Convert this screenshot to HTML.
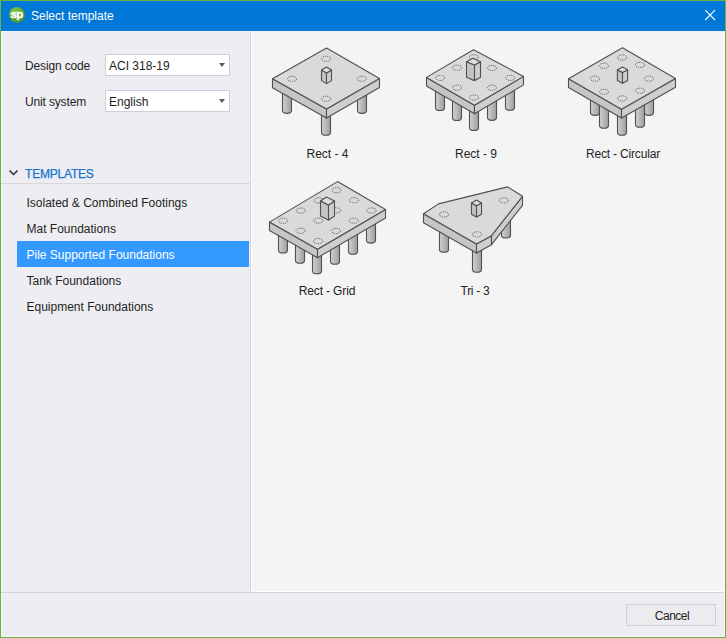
<!DOCTYPE html>
<html><head><meta charset="utf-8">
<style>
*{box-sizing:border-box}
html,body{margin:0;padding:0}
body{width:726px;height:638px;overflow:hidden;position:relative;background:#6db33f;font-family:"Liberation Sans",sans-serif;font-size:12px;color:#1e1e1e}
.a{position:absolute}
.t{position:absolute;line-height:14px;white-space:nowrap}
#win{left:1px;top:1px;width:724px;height:636px;background:#f8f7fc}
#title{left:1px;top:1px;width:724px;height:30px;background:#0078d7}
#titleline{left:1px;top:31px;width:724px;height:1px;background:#f6f2f2}
#left{left:2px;top:32px;width:248px;height:560px;background:#eeeef2}
#vline{left:250px;top:32px;width:1px;height:560px;background:#d3d5d5}
#vwhite{left:251px;top:32px;width:1px;height:560px;background:#ffffff}
#right{left:252px;top:32px;width:472px;height:559px;background:#f4f4f4}
#hwhite{left:251px;top:591px;width:473px;height:1px;background:#ffffff}
#hline{left:1px;top:592px;width:723px;height:1px;background:#d4d4d8}
#foot{left:2px;top:593px;width:722px;height:43px;background:#eeeef2}
.combo{position:absolute;left:105px;width:125px;height:22px;background:#fff;border:1px solid #cccedb}
.combo span{position:absolute;left:3px;top:4px;line-height:14px}
.combo i{position:absolute;left:113px;top:8px;width:0;height:0;border-left:3px solid transparent;border-right:3px solid transparent;border-top:4px solid #5a5a5a}
.item{position:absolute;left:17px;width:232px;height:26px;line-height:26px;padding-left:9.5px;padding-top:1px;white-space:nowrap}
.sel{background:#3399ff;color:#fff}
.lbl{position:absolute;line-height:14px;white-space:nowrap;text-align:center;width:140px}
#cancel{left:626px;top:604px;width:90px;height:22px;border:1px solid #cccedb;background:#ececf0}
</style></head><body>
<div class="a" id="win"></div>
<div class="a" id="title"></div>
<div class="a" id="titleline"></div>
<svg class="a" style="left:0;top:0" width="40" height="31" viewBox="0 0 40 31">
 <defs><radialGradient id="ig" cx="0.35" cy="0.3" r="0.8"><stop offset="0" stop-color="#86c94a"/><stop offset="1" stop-color="#3f8f2a"/></radialGradient></defs>
 <circle cx="16.9" cy="14.9" r="8" fill="url(#ig)"/>
 <text x="10.4" y="17.9" font-family="Liberation Sans" font-weight="bold" font-size="11.5" fill="#fff" stroke="#fff" stroke-width="0.35" letter-spacing="-0.6">sp</text>
</svg>
<div class="t" style="left:31px;top:9px;color:#fff">Select template</div>
<svg class="a" style="left:700px;top:5px" width="20" height="20" viewBox="700 5 20 20">
 <path d="M705.2,10.2 L715,20 M715,10.2 L705.2,20" stroke="#fff" stroke-width="1.1" fill="none"/>
</svg>
<div class="a" id="left"></div>
<div class="a" id="vline"></div>
<div class="a" id="vwhite"></div>
<div class="a" id="right"></div>
<div class="a" id="hwhite"></div>
<div class="a" id="hline"></div>
<div class="a" id="foot"></div>

<div class="t" style="left:25px;top:59px;letter-spacing:-0.15px">Design code</div>
<div class="combo" style="top:54px"><span>ACI 318-19</span><i></i></div>
<div class="t" style="left:25px;top:95px;letter-spacing:-0.15px">Unit system</div>
<div class="combo" style="top:90px"><span>English</span><i></i></div>

<svg class="a" style="left:0;top:160px" width="24" height="24" viewBox="0 160 24 24">
 <path d="M9.5,170.5 L13.5,174.5 L17.5,170.5" stroke="#2d2d30" stroke-width="1.5" fill="none"/>
</svg>
<div class="t" style="left:25px;top:167px;color:#1472d2;letter-spacing:-0.2px;-webkit-text-stroke:0.25px #1472d2">TEMPLATES</div>
<div class="a" style="left:1px;top:183px;width:249px;height:1px;background:#d6d6dc"></div>

<div class="item" style="top:189px">Isolated &amp; Combined Footings</div>
<div class="item" style="top:215px">Mat Foundations</div>
<div class="item sel" style="top:241px">Pile Supported Foundations</div>
<div class="item" style="top:267px">Tank Foundations</div>
<div class="item" style="top:293px">Equipment Foundations</div>

<svg class="a" style="left:0;top:0" width="726" height="638" viewBox="0 0 726 638">
<defs><linearGradient id="pg" x1="0" y1="0" x2="1" y2="0"><stop offset="0" stop-color="#d2d2d2"/><stop offset="1" stop-color="#9e9e9e"/></linearGradient></defs>
<path d="M282.50,90.00 L282.50,110.60 A4.50,2.80 0 0 0 291.50,110.60 L291.50,90.00 Z" fill="url(#pg)" stroke="#505050" stroke-width="1.1"/><path d="M357.50,90.00 L357.50,110.60 A4.50,2.80 0 0 0 366.50,110.60 L366.50,90.00 Z" fill="url(#pg)" stroke="#505050" stroke-width="1.1"/><path d="M321.50,112.00 L321.50,132.50 A4.50,2.80 0 0 0 330.50,132.50 L330.50,112.00 Z" fill="url(#pg)" stroke="#505050" stroke-width="1.1"/><polygon points="272.50,78.80 326.50,109.10 326.50,118.10 272.50,87.80" fill="#c6c6c6" stroke="#505050" stroke-width="1.1" stroke-linejoin="round"/><polygon points="326.50,109.10 379.50,78.60 379.50,87.60 326.50,118.10" fill="#cecece" stroke="#505050" stroke-width="1.1" stroke-linejoin="round"/><polygon points="326.50,48.00 379.50,78.60 326.50,109.10 272.50,78.80" fill="#dadada" stroke="#505050" stroke-width="1.1" stroke-linejoin="round"/><ellipse cx="326.10" cy="58.80" rx="4.6" ry="2.6" fill="none" stroke="#555" stroke-width="0.9" stroke-dasharray="1.2 1"/><ellipse cx="292.00" cy="78.90" rx="4.6" ry="2.6" fill="none" stroke="#555" stroke-width="0.9" stroke-dasharray="1.2 1"/><ellipse cx="361.90" cy="78.80" rx="4.6" ry="2.6" fill="none" stroke="#555" stroke-width="0.9" stroke-dasharray="1.2 1"/><ellipse cx="326.10" cy="98.80" rx="4.6" ry="2.6" fill="none" stroke="#555" stroke-width="0.9" stroke-dasharray="1.2 1"/><polygon points="321.50,70.00 326.50,73.00 326.50,83.60 321.50,80.60" fill="#c4c4c4" stroke="#505050" stroke-width="1.1" stroke-linejoin="round"/><polygon points="326.50,73.00 331.50,70.00 331.50,80.60 326.50,83.60" fill="#cdcdcd" stroke="#505050" stroke-width="1.1" stroke-linejoin="round"/><polygon points="326.50,67.00 331.50,70.00 326.50,73.00 321.50,70.00" fill="#dedede" stroke="#505050" stroke-width="1.1" stroke-linejoin="round"/><path d="M435.50,90.00 L435.50,107.70 A4.50,2.80 0 0 0 444.50,107.70 L444.50,90.00 Z" fill="url(#pg)" stroke="#505050" stroke-width="1.1"/><path d="M505.50,90.00 L505.50,107.50 A4.50,2.80 0 0 0 514.50,107.50 L514.50,90.00 Z" fill="url(#pg)" stroke="#505050" stroke-width="1.1"/><path d="M452.50,95.00 L452.50,117.70 A4.50,2.80 0 0 0 461.50,117.70 L461.50,95.00 Z" fill="url(#pg)" stroke="#505050" stroke-width="1.1"/><path d="M487.50,95.00 L487.50,117.60 A4.50,2.80 0 0 0 496.50,117.60 L496.50,95.00 Z" fill="url(#pg)" stroke="#505050" stroke-width="1.1"/><path d="M469.50,108.00 L469.50,127.70 A4.50,2.80 0 0 0 478.50,127.70 L478.50,108.00 Z" fill="url(#pg)" stroke="#505050" stroke-width="1.1"/><polygon points="426.50,77.40 474.50,105.30 474.50,113.80 426.50,85.90" fill="#c6c6c6" stroke="#505050" stroke-width="1.1" stroke-linejoin="round"/><polygon points="474.50,105.30 523.50,76.40 523.50,84.90 474.50,113.80" fill="#cecece" stroke="#505050" stroke-width="1.1" stroke-linejoin="round"/><polygon points="473.50,49.70 523.50,76.40 474.50,105.30 426.50,77.40" fill="#dadada" stroke="#505050" stroke-width="1.1" stroke-linejoin="round"/><ellipse cx="473.80" cy="57.20" rx="4.6" ry="2.6" fill="none" stroke="#555" stroke-width="0.9" stroke-dasharray="1.2 1"/><ellipse cx="457.10" cy="67.80" rx="4.6" ry="2.6" fill="none" stroke="#555" stroke-width="0.9" stroke-dasharray="1.2 1"/><ellipse cx="491.90" cy="68.00" rx="4.6" ry="2.6" fill="none" stroke="#555" stroke-width="0.9" stroke-dasharray="1.2 1"/><ellipse cx="440.20" cy="77.90" rx="4.6" ry="2.6" fill="none" stroke="#555" stroke-width="0.9" stroke-dasharray="1.2 1"/><ellipse cx="474.00" cy="77.70" rx="4.6" ry="2.6" fill="none" stroke="#555" stroke-width="0.9" stroke-dasharray="1.2 1"/><ellipse cx="510.20" cy="77.90" rx="4.6" ry="2.6" fill="none" stroke="#555" stroke-width="0.9" stroke-dasharray="1.2 1"/><ellipse cx="457.10" cy="87.70" rx="4.6" ry="2.6" fill="none" stroke="#555" stroke-width="0.9" stroke-dasharray="1.2 1"/><ellipse cx="491.90" cy="87.70" rx="4.6" ry="2.6" fill="none" stroke="#555" stroke-width="0.9" stroke-dasharray="1.2 1"/><ellipse cx="474.00" cy="97.60" rx="4.6" ry="2.6" fill="none" stroke="#555" stroke-width="0.9" stroke-dasharray="1.2 1"/><polygon points="466.50,61.70 474.50,65.10 474.50,80.60 466.50,77.20" fill="#c4c4c4" stroke="#505050" stroke-width="1.1" stroke-linejoin="round"/><polygon points="474.50,65.10 480.50,61.70 480.50,77.20 474.50,80.60" fill="#cdcdcd" stroke="#505050" stroke-width="1.1" stroke-linejoin="round"/><polygon points="473.00,58.30 480.50,61.70 474.50,65.10 466.50,61.70" fill="#dedede" stroke="#505050" stroke-width="1.1" stroke-linejoin="round"/><path d="M590.50,95.00 L590.50,112.60 A4.50,2.80 0 0 0 599.50,112.60 L599.50,95.00 Z" fill="url(#pg)" stroke="#505050" stroke-width="1.1"/><path d="M644.50,95.00 L644.50,112.60 A4.50,2.80 0 0 0 653.50,112.60 L653.50,95.00 Z" fill="url(#pg)" stroke="#505050" stroke-width="1.1"/><path d="M599.50,100.00 L599.50,125.40 A4.50,2.80 0 0 0 608.50,125.40 L608.50,100.00 Z" fill="url(#pg)" stroke="#505050" stroke-width="1.1"/><path d="M635.50,100.00 L635.50,124.40 A4.50,2.80 0 0 0 644.50,124.40 L644.50,100.00 Z" fill="url(#pg)" stroke="#505050" stroke-width="1.1"/><path d="M617.50,112.00 L617.50,132.40 A4.50,2.80 0 0 0 626.50,132.40 L626.50,112.00 Z" fill="url(#pg)" stroke="#505050" stroke-width="1.1"/><polygon points="568.50,78.70 621.50,109.20 621.50,118.00 568.50,87.50" fill="#c6c6c6" stroke="#505050" stroke-width="1.1" stroke-linejoin="round"/><polygon points="621.50,109.20 675.50,78.50 675.50,87.30 621.50,118.00" fill="#cecece" stroke="#505050" stroke-width="1.1" stroke-linejoin="round"/><polygon points="622.50,47.80 675.50,78.50 621.50,109.20 568.50,78.70" fill="#dadada" stroke="#505050" stroke-width="1.1" stroke-linejoin="round"/><ellipse cx="649.00" cy="78.70" rx="4.6" ry="2.6" fill="none" stroke="#555" stroke-width="0.9" stroke-dasharray="1.2 1"/><ellipse cx="640.10" cy="64.90" rx="4.6" ry="2.6" fill="none" stroke="#555" stroke-width="0.9" stroke-dasharray="1.2 1"/><ellipse cx="640.10" cy="90.70" rx="4.6" ry="2.6" fill="none" stroke="#555" stroke-width="0.9" stroke-dasharray="1.2 1"/><ellipse cx="622.20" cy="57.50" rx="4.6" ry="2.6" fill="none" stroke="#555" stroke-width="0.9" stroke-dasharray="1.2 1"/><ellipse cx="622.20" cy="98.40" rx="4.6" ry="2.6" fill="none" stroke="#555" stroke-width="0.9" stroke-dasharray="1.2 1"/><ellipse cx="604.00" cy="65.80" rx="4.6" ry="2.6" fill="none" stroke="#555" stroke-width="0.9" stroke-dasharray="1.2 1"/><ellipse cx="604.00" cy="91.80" rx="4.6" ry="2.6" fill="none" stroke="#555" stroke-width="0.9" stroke-dasharray="1.2 1"/><ellipse cx="595.00" cy="78.70" rx="4.6" ry="2.6" fill="none" stroke="#555" stroke-width="0.9" stroke-dasharray="1.2 1"/><polygon points="617.40,69.70 622.50,72.50 622.50,83.30 617.40,80.50" fill="#c4c4c4" stroke="#505050" stroke-width="1.1" stroke-linejoin="round"/><polygon points="622.50,72.50 627.60,69.70 627.60,80.50 622.50,83.30" fill="#cdcdcd" stroke="#505050" stroke-width="1.1" stroke-linejoin="round"/><polygon points="622.50,66.90 627.60,69.70 622.50,72.50 617.40,69.70" fill="#dedede" stroke="#505050" stroke-width="1.1" stroke-linejoin="round"/><path d="M278.50,225.00 L278.50,250.20 A4.50,2.80 0 0 0 287.50,250.20 L287.50,225.00 Z" fill="url(#pg)" stroke="#505050" stroke-width="1.1"/><path d="M366.50,212.00 L366.50,240.30 A4.50,2.80 0 0 0 375.50,240.30 L375.50,212.00 Z" fill="url(#pg)" stroke="#505050" stroke-width="1.1"/><path d="M295.50,235.00 L295.50,260.50 A4.50,2.80 0 0 0 304.50,260.50 L304.50,235.00 Z" fill="url(#pg)" stroke="#505050" stroke-width="1.1"/><path d="M348.50,225.00 L348.50,251.40 A4.50,2.80 0 0 0 357.50,251.40 L357.50,225.00 Z" fill="url(#pg)" stroke="#505050" stroke-width="1.1"/><path d="M312.50,245.00 L312.50,270.90 A4.50,2.80 0 0 0 321.50,270.90 L321.50,245.00 Z" fill="url(#pg)" stroke="#505050" stroke-width="1.1"/><path d="M330.50,235.00 L330.50,261.50 A4.50,2.80 0 0 0 339.50,261.50 L339.50,235.00 Z" fill="url(#pg)" stroke="#505050" stroke-width="1.1"/><polygon points="269.50,222.10 317.50,249.20 317.50,257.70 269.50,230.60" fill="#c6c6c6" stroke="#505050" stroke-width="1.1" stroke-linejoin="round"/><polygon points="317.50,249.20 385.50,209.60 385.50,218.10 317.50,257.70" fill="#cecece" stroke="#505050" stroke-width="1.1" stroke-linejoin="round"/><polygon points="337.50,181.60 385.50,209.60 317.50,249.20 269.50,222.10" fill="#dadada" stroke="#505050" stroke-width="1.1" stroke-linejoin="round"/><ellipse cx="336.50" cy="190.20" rx="4.6" ry="2.6" fill="none" stroke="#555" stroke-width="0.9" stroke-dasharray="1.2 1"/><ellipse cx="318.70" cy="200.40" rx="4.6" ry="2.6" fill="none" stroke="#555" stroke-width="0.9" stroke-dasharray="1.2 1"/><ellipse cx="300.90" cy="210.60" rx="4.6" ry="2.6" fill="none" stroke="#555" stroke-width="0.9" stroke-dasharray="1.2 1"/><ellipse cx="283.10" cy="220.80" rx="4.6" ry="2.6" fill="none" stroke="#555" stroke-width="0.9" stroke-dasharray="1.2 1"/><ellipse cx="354.00" cy="200.20" rx="4.6" ry="2.6" fill="none" stroke="#555" stroke-width="0.9" stroke-dasharray="1.2 1"/><ellipse cx="336.20" cy="210.40" rx="4.6" ry="2.6" fill="none" stroke="#555" stroke-width="0.9" stroke-dasharray="1.2 1"/><ellipse cx="318.40" cy="220.60" rx="4.6" ry="2.6" fill="none" stroke="#555" stroke-width="0.9" stroke-dasharray="1.2 1"/><ellipse cx="300.60" cy="230.80" rx="4.6" ry="2.6" fill="none" stroke="#555" stroke-width="0.9" stroke-dasharray="1.2 1"/><ellipse cx="371.50" cy="210.50" rx="4.6" ry="2.6" fill="none" stroke="#555" stroke-width="0.9" stroke-dasharray="1.2 1"/><ellipse cx="353.70" cy="220.70" rx="4.6" ry="2.6" fill="none" stroke="#555" stroke-width="0.9" stroke-dasharray="1.2 1"/><ellipse cx="335.90" cy="230.90" rx="4.6" ry="2.6" fill="none" stroke="#555" stroke-width="0.9" stroke-dasharray="1.2 1"/><ellipse cx="318.10" cy="241.10" rx="4.6" ry="2.6" fill="none" stroke="#555" stroke-width="0.9" stroke-dasharray="1.2 1"/><polygon points="320.50,201.00 328.50,205.00 328.50,220.00 320.50,216.00" fill="#c4c4c4" stroke="#505050" stroke-width="1.1" stroke-linejoin="round"/><polygon points="328.50,205.00 334.50,201.00 334.50,216.00 328.50,220.00" fill="#cdcdcd" stroke="#505050" stroke-width="1.1" stroke-linejoin="round"/><polygon points="326.50,197.00 334.50,201.00 328.50,205.00 320.50,201.00" fill="#dedede" stroke="#505050" stroke-width="1.1" stroke-linejoin="round"/><path d="M439.50,222.00 L439.50,249.50 A4.50,2.80 0 0 0 448.50,249.50 L448.50,222.00 Z" fill="url(#pg)" stroke="#505050" stroke-width="1.1"/><path d="M501.50,205.00 L501.50,235.20 A4.50,2.80 0 0 0 510.50,235.20 L510.50,205.00 Z" fill="url(#pg)" stroke="#505050" stroke-width="1.1"/><path d="M472.50,245.00 L472.50,269.50 A4.50,2.80 0 0 0 481.50,269.50 L481.50,245.00 Z" fill="url(#pg)" stroke="#505050" stroke-width="1.1"/><polygon points="423.50,213.80 476.50,244.10 476.50,253.10 423.50,222.80" fill="#c6c6c6" stroke="#505050" stroke-width="1.1" stroke-linejoin="round"/><polygon points="476.50,244.10 491.50,235.70 491.50,244.70 476.50,253.10" fill="#cecece" stroke="#505050" stroke-width="1.1" stroke-linejoin="round"/><polygon points="491.50,235.70 522.50,196.30 522.50,205.30 491.50,244.70" fill="#cecece" stroke="#505050" stroke-width="1.1" stroke-linejoin="round"/><polygon points="423.50,213.80 438.50,203.90 507.50,186.90 522.50,196.30 491.50,235.70 476.50,244.10" fill="#dadada" stroke="#505050" stroke-width="1.1" stroke-linejoin="round"/><ellipse cx="444.10" cy="214.40" rx="4.6" ry="2.6" fill="none" stroke="#555" stroke-width="0.9" stroke-dasharray="1.2 1"/><ellipse cx="477.00" cy="234.40" rx="4.6" ry="2.6" fill="none" stroke="#555" stroke-width="0.9" stroke-dasharray="1.2 1"/><ellipse cx="503.90" cy="200.40" rx="4.6" ry="2.6" fill="none" stroke="#555" stroke-width="0.9" stroke-dasharray="1.2 1"/><polygon points="471.50,202.90 476.50,205.70 476.50,217.00 471.50,214.20" fill="#c4c4c4" stroke="#505050" stroke-width="1.1" stroke-linejoin="round"/><polygon points="476.50,205.70 481.50,202.90 481.50,214.20 476.50,217.00" fill="#cdcdcd" stroke="#505050" stroke-width="1.1" stroke-linejoin="round"/><polygon points="476.50,200.10 481.50,202.90 476.50,205.70 471.50,202.90" fill="#dedede" stroke="#505050" stroke-width="1.1" stroke-linejoin="round"/>
</svg>

<div class="lbl" style="left:257.5px;top:147px">Rect - 4</div>
<div class="lbl" style="left:406px;top:147px">Rect - 9</div>
<div class="lbl" style="left:553px;top:147px;letter-spacing:-0.18px">Rect - Circular</div>
<div class="lbl" style="left:257px;top:284px;letter-spacing:-0.15px">Rect - Grid</div>
<div class="lbl" style="left:405px;top:284px;letter-spacing:-0.3px">Tri - 3</div>

<div class="a" id="cancel"></div>
<div class="t" style="left:627px;top:609px;width:90px;text-align:center;letter-spacing:-0.5px">Cancel</div>
</body></html>
